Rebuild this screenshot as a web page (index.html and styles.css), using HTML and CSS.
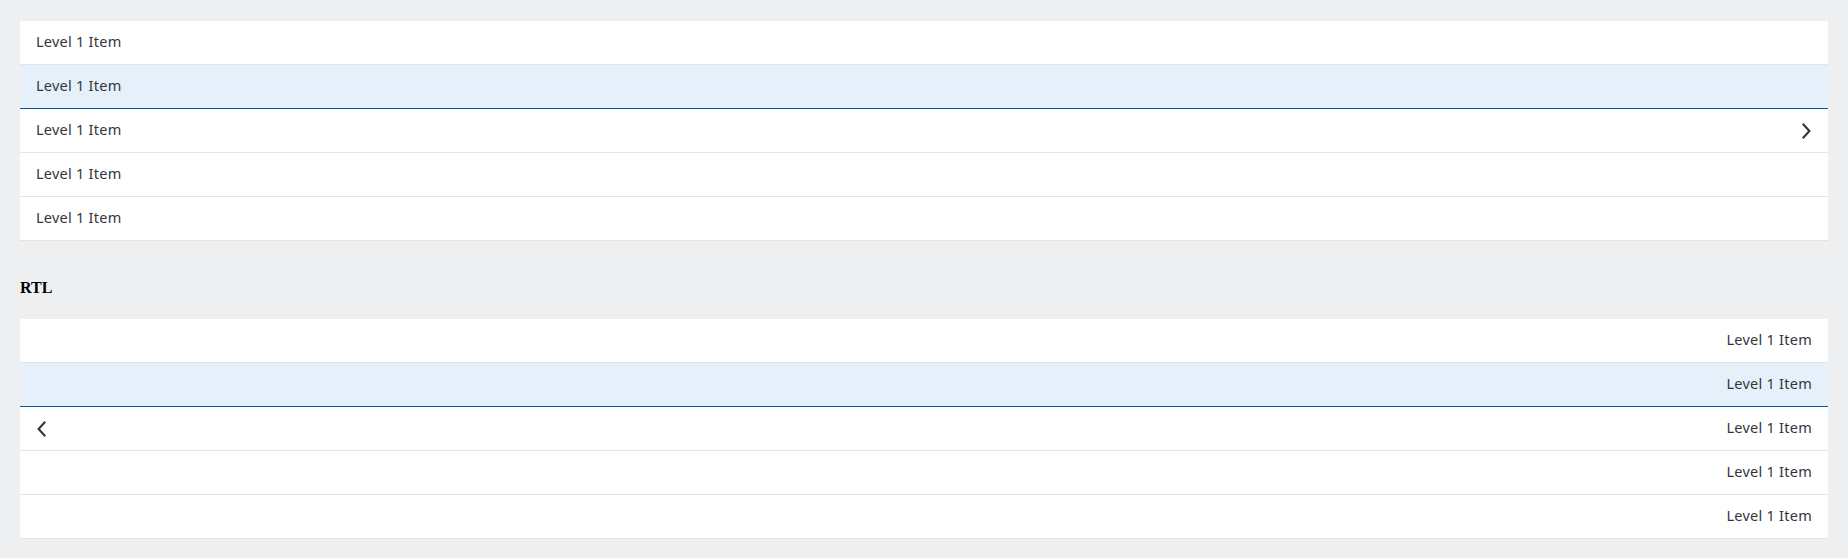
FILE: index.html
```html
<!DOCTYPE html>
<html lang="en">
<head>
<meta charset="utf-8">
<title>Navigation list</title>
<link rel="stylesheet" href="styles.css">
</head>
<body>
  <ul class="nav-list">
    <li class="nav-item"><span class="nav-text">Level 1 Item</span></li>
    <li class="nav-item is-selected"><span class="nav-text">Level 1 Item</span></li>
    <li class="nav-item"><span class="nav-text">Level 1 Item</span>
      <svg class="nav-arrow" width="16" height="16" viewBox="0 0 16 16" aria-hidden="true"><path d="M6.8 0.8 L13.4 8 L6.8 15.2" /></svg>
    </li>
    <li class="nav-item"><span class="nav-text">Level 1 Item</span></li>
    <li class="nav-item"><span class="nav-text">Level 1 Item</span></li>
  </ul>

  <h4 class="section-title">RTL</h4>

  <ul class="nav-list" dir="rtl">
    <li class="nav-item"><span class="nav-text">Level 1 Item</span></li>
    <li class="nav-item is-selected"><span class="nav-text">Level 1 Item</span></li>
    <li class="nav-item"><span class="nav-text">Level 1 Item</span>
      <svg class="nav-arrow" width="16" height="16" viewBox="0 0 16 16" aria-hidden="true"><path d="M9.2 0.8 L2.6 8 L9.2 15.2" /></svg>
    </li>
    <li class="nav-item"><span class="nav-text">Level 1 Item</span></li>
    <li class="nav-item"><span class="nav-text">Level 1 Item</span></li>
  </ul>
</body>
</html>
```

FILE: styles.css
```css
html, body {
  margin: 0;
  padding: 0;
}

body {
  background: #edeff0;
  padding: 21px 20px 19px;
  font-family: "Liberation Serif", serif;
}

.nav-list {
  list-style: none;
  margin: 0;
  padding: 0;
  background: #ffffff;
}

.nav-item {
  display: flex;
  align-items: center;
  height: 40px;
  padding: 0 16px 3px;
  border-bottom: 1px solid #e4e4e4;
  font-family: "Noto Sans", "Open Sans", sans-serif;
  font-size: 14.5px;
  letter-spacing: 0.25px;
  color: #32363a;
}

.nav-item.is-selected {
  background: #e5f0fa;
  border-bottom-color: #0854a0;
}

.nav-text {
  flex: 1;
  white-space: nowrap;
}

.nav-arrow {
  flex: none;
  display: block;
  margin-top: 3px;
}

.nav-arrow path {
  fill: none;
  stroke: #32363a;
  stroke-width: 2.1;
  stroke-linejoin: miter;
}

.section-title {
  margin: 38px 0 22px;
  font-size: 16px;
  line-height: 18px;
  font-weight: bold;
  color: #000000;
}
```
